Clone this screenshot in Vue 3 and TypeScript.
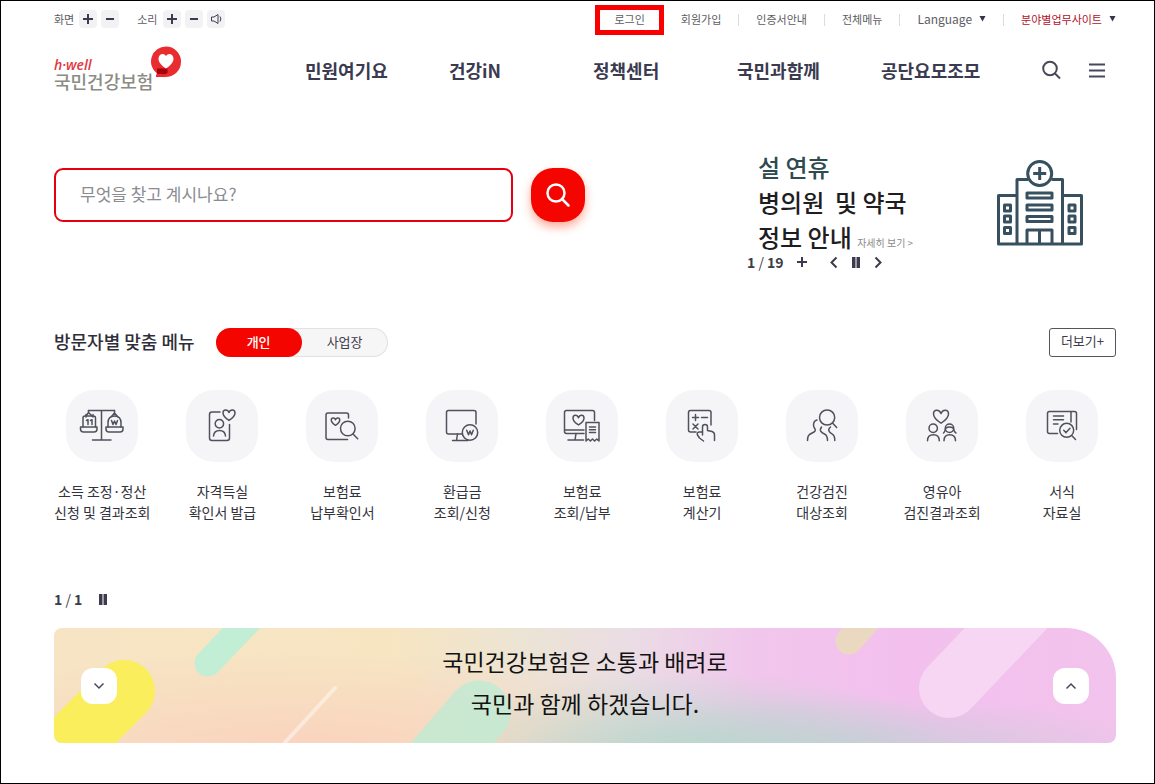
<script setup lang="ts">
import { ref } from 'vue'

interface QuickItem {
  id: string
  lines: [string, string]
}

const heart = (x: number, y: number, s: number): string =>
  `M${x} ${y + s * 0.45}C${x - s * 0.3} ${y + s * 0.25} ${x - s * 0.5} ${y} ${x - s * 0.5} ${y - s * 0.17}` +
  `C${x - s * 0.5} ${y - s * 0.5} ${x - s * 0.1} ${y - s * 0.5} ${x} ${y - s * 0.2}` +
  `C${x + s * 0.1} ${y - s * 0.5} ${x + s * 0.5} ${y - s * 0.5} ${x + s * 0.5} ${y - s * 0.17}` +
  `C${x + s * 0.5} ${y} ${x + s * 0.3} ${y + s * 0.25} ${x} ${y + s * 0.45}Z`

const mainMenu: string[] = ['민원여기요', '건강iN', '정책센터', '국민과함께', '공단요모조모']

const quickItems: QuickItem[] = [
  { id: 'scale', lines: ['소득 조정·정산', '신청 및 결과조회'] },
  { id: 'card', lines: ['자격득실', '확인서 발급'] },
  { id: 'docsearch', lines: ['보험료', '납부확인서'] },
  { id: 'refund', lines: ['환급금', '조회/신청'] },
  { id: 'pay', lines: ['보험료', '조회/납부'] },
  { id: 'calc', lines: ['보험료', '계산기'] },
  { id: 'checkup', lines: ['건강검진', '대상조회'] },
  { id: 'infant', lines: ['영유아', '검진결과조회'] },
  { id: 'forms', lines: ['서식', '자료실'] },
]

const iconPaths: Record<string, string[]> = {
  scale: [
    'M22.5 20.5H48.5M35.5 20.5V50M26.5 50H45',
    'M22.5 20.5V22.5L20 26M22.5 22.5L26 26M48.5 20.5V23L45.5 26.5M48.5 23L51.5 26.5',
    'M17 37V28Q17 26 19 26H27.5Q29.5 26 29.5 28V37M20 24.5V27M27 24.5V27',
    'M14.5 37H31V39Q31 42 28 42H17.5Q14.5 42 14.5 39Z',
    'M42 37V33Q42 26 48.5 26Q55 26 55 33V37',
    'M40 37H57V39Q57 42 54 42H43Q40 42 40 39Z',
    'M20.5 30.5L22 29.7V34.5M24.5 30.5L26 29.7V34.5',
    'M45.5 30.5L47 34.5L48.5 31L50 34.5L51.5 30.5',
  ],
  card: [
    'M34 22H26Q23.5 22 23.5 24.5V48Q23.5 50.5 26 50.5H41Q43.5 50.5 43.5 48V34.5',
    heart(43, 25, 12),
    'M29.2 33.8A4.2 4.2 0 1 0 37.6 33.8A4.2 4.2 0 1 0 29.2 33.8Z',
    'M27.5 46Q28 40.5 33.5 40.5Q39 40.5 39.5 46',
  ],
  docsearch: [
    'M42.5 28V25Q42.5 23 40.5 23H22Q20 23 20 25V47.5Q20 49.5 22 49.5H41.5',
    heart(29.5, 31.5, 8.5),
    'M34.5 38.5A7.3 7.3 0 1 0 49.1 38.5A7.3 7.3 0 1 0 34.5 38.5ZM47 44L51.7 48.7',
  ],
  refund: [
    'M50 34V22.5Q50 20.5 48 20.5H22.5Q20.5 20.5 20.5 22.5V42Q20.5 44 22.5 44H36',
    'M31.5 44L30.5 50.5M26.5 50.5H42',
    'M36.3 42.5A7.7 7.7 0 1 0 51.7 42.5A7.7 7.7 0 1 0 36.3 42.5Z',
    'M40.7 40.3L42.5 44.7L44 41L45.5 44.7L47.3 40.3',
  ],
  pay: [
    'M48.5 30.5V22.5Q48.5 20.5 46.5 20.5H20.5Q18.5 20.5 18.5 22.5V41.5Q18.5 43.5 20.5 43.5H38M18.5 40H38',
    'M30 43.5L29 50M22 50H37.5',
    heart(32.5, 30, 11),
    'M40 32.5H53V51L50.8 49L48.6 51L46.5 49L44.4 51L42.2 49L40 51Z',
    'M43.5 37H49.5M43.5 39.8H49.5M43.5 42.6H49.5',
  ],
  calc: [
    'M45 35V22.5Q45 20.5 43 20.5H24.5Q22.5 20.5 22.5 22.5V40Q22.5 42 24.5 42H30',
    'M26.5 27.5H32.5M29.5 24.5V30.5M35.5 27.5H41.5M27 34L32 39M32 34L27 39',
    'M36.5 45V37Q36.5 34.5 39 34.5Q41.5 34.5 41.5 37V40.5L46 41.5Q48.5 42.3 48.5 45V50.5',
    'M36.5 42H33Q30.5 42.5 31.5 45L33.5 48L37.5 51',
  ],
  checkup: [
    'M33.5 27.5A7.6 7.6 0 1 0 48.7 27.5A7.6 7.6 0 1 0 33.5 27.5ZM46.5 33L50.7 37.5',
    'M31 30Q27.5 31 27.5 35Q27.5 37 29 39Q30 41.5 27 42.5L23.5 44.5Q21.5 46 21.5 50.5',
    'M35.5 37Q33.5 40 35 41.5Q36 43 38.5 44Q41.5 45.5 41.5 50.5',
    'M44.5 37Q42 39 43 41Q43.5 42.5 46 43.8Q49 45.5 48.8 50.5',
  ],
  infant: [
    heart(35, 26.5, 15),
    'M23 38.3A4.2 4.2 0 1 0 31.4 38.3A4.2 4.2 0 1 0 23 38.3ZM21.5 50.7Q21.5 44.7 27.4 44.7Q33.3 44.7 33.3 50.7',
    'M39.3 38.3A4.2 4.2 0 1 0 47.7 38.3A4.2 4.2 0 1 0 39.3 38.3ZM38 50.7Q38 44.7 43.7 44.7Q49.5 44.7 49.5 50.7',
    'M39.3 39Q39 42 37.5 43M47.7 39Q48 42 50 43M40 38Q43.5 36 47 38',
  ],
  forms: [
    'M50.5 39.5V23.5Q50.5 21.5 48.5 21.5H23.5Q21.5 21.5 21.5 23.5V41.5Q21.5 43.5 23.5 43.5H31.5M45 21.5V32',
    'M27.5 26H37.5M27.5 29.7H37.5M27.5 34H32',
    'M33.7 40.3A7 7 0 1 0 47.7 40.3A7 7 0 1 0 33.7 40.3ZM45.7 45.5L49.5 49.5M37.7 40.3L40 42.6L44 38.3',
  ],
}

const activeTab = ref<'personal' | 'business'>('personal')
const query = ref<string>('')
</script>

<template>
  <div class="page">
    <header>
      <div class="utility">
        <div class="adjust">
          <span>화면</span>
          <button type="button" aria-label="화면 확대">
            <svg width="18" height="18" viewBox="0 0 18 18"><path d="M4 9H14M9 4V14" /></svg>
          </button>
          <button type="button" aria-label="화면 축소">
            <svg width="18" height="18" viewBox="0 0 18 18"><path d="M5 9H13" /></svg>
          </button>
        </div>
        <div class="adjust">
          <span>소리</span>
          <button type="button" aria-label="소리 크게">
            <svg width="18" height="18" viewBox="0 0 18 18"><path d="M4 9H14M9 4V14" /></svg>
          </button>
          <button type="button" aria-label="소리 작게">
            <svg width="18" height="18" viewBox="0 0 18 18"><path d="M5 9H13" /></svg>
          </button>
          <button type="button" aria-label="음소거">
            <svg class="thin" width="18" height="18" viewBox="0 0 18 18">
              <path d="M4.5 7H7L11 4.5V13.5L7 11H4.5ZM13 6.5Q14.8 9 13 11.5" />
            </svg>
          </button>
        </div>
        <nav class="links" aria-label="사용자 메뉴">
          <a class="login" href="#">로그인</a>
          <a href="#">회원가입</a>
          <i class="sep"></i>
          <a href="#">인증서안내</a>
          <i class="sep"></i>
          <a href="#">전체메뉴</a>
          <i class="sep"></i>
          <button class="language" type="button">
            Language<svg width="7" height="6" viewBox="0 0 7 6"><path d="M.5 0H6.5L3.5 5.5Z" /></svg>
          </button>
          <i class="sep"></i>
          <button class="sites" type="button">
            분야별업무사이트<svg width="7" height="6" viewBox="0 0 7 6"><path d="M.5 0H6.5L3.5 5.5Z" /></svg>
          </button>
        </nav>
      </div>

      <div class="gnb">
        <a class="logo" href="#">
          <span class="brand"><em>h·well</em><strong>국민건강보험</strong></span>
          <svg width="32" height="32" viewBox="0 0 32 32">
            <path fill="#e92c30" d="M16 .5A15 15 0 0 1 31 15.5C31 25 24 31 15 31H6Q5.5 29 7 27.5A15 15 0 0 1 16 .5Z" />
            <path fill="#a9000d" d="M7 22.5H17.5V27Q16 28.5 12 28H7Z" />
            <path fill="#fff" d="M16 22.5C12 20 8.5 16.5 8.5 12.8C8.5 7.5 14 6.5 16 10C18 6.5 23.5 7.5 23.5 12.8C23.5 16.5 20 20 16 22.5Z" />
          </svg>
        </a>
        <nav class="menu" aria-label="주 메뉴">
          <a v-for="item in mainMenu" :key="item" href="#">{{ item }}</a>
        </nav>
        <div class="tools">
          <button type="button" aria-label="검색 열기">
            <svg width="20" height="20" viewBox="0 0 20 20"><circle cx="9" cy="8.5" r="6.8" /><path d="M14 13.5L19 18.5" /></svg>
          </button>
          <button type="button" aria-label="전체 메뉴 열기">
            <svg width="20" height="20" viewBox="0 0 20 20"><path d="M2 4.5H18M2 10.5H18M2 16.5H18" /></svg>
          </button>
        </div>
      </div>
    </header>

    <main>
      <section class="hero">
        <form class="search" role="search" @submit.prevent>
          <input v-model="query" type="text" aria-label="검색어" placeholder="무엇을 찾고 계시나요?" />
          <button type="submit" aria-label="검색">
            <svg width="26" height="26" viewBox="0 0 26 26"><circle cx="11" cy="11" r="8.5" /><path d="M17 17L23.5 23.5" /></svg>
          </button>
        </form>

        <div class="promo">
          <div class="slide">
            <p>
              <span class="lead">설 연휴</span><br />병의원&nbsp; 및 약국<br />정보 안내
              <a href="#">자세히 보기 &gt;</a>
            </p>
            <svg width="88" height="88" viewBox="0 0 88 88" aria-hidden="true">
              <path d="M21 36.5H2.5V85H85.5V36.5H66.5M21 85V20.5H32M55.5 20.5H66.5V85" />
              <circle cx="43.7" cy="14.5" r="12" />
              <path d="M43.7 8V21M37.2 14.5H50.2" />
              <path d="M31 34H56V39H31ZM31 46H56V51H31ZM31 57.5H56V62.5H31ZM31 85V71H56V85M43.5 71V85" />
              <path d="M8.5 46H14.5V52H8.5ZM8.5 57H14.5V63H8.5ZM8.5 68.5H14.5V74.5H8.5ZM73 46H79V52H73ZM73 57H79V63H73ZM73 68.5H79V74.5H73Z" />
            </svg>
          </div>
          <div class="pager">
            <span class="count"><b>1</b> / <b>19</b></span>
            <button class="more" type="button" aria-label="배너 전체보기">
              <svg width="12" height="18" viewBox="0 0 12 18"><path d="M1 9H11M6 4V14" /></svg>
            </button>
            <button type="button" aria-label="이전">
              <svg width="10" height="18" viewBox="0 0 10 18"><path d="M7.5 4.5L2.500 9.5L7.500 14.5" /></svg>
            </button>
            <button type="button" aria-label="일시정지">
              <svg class="solid" width="10" height="18" viewBox="0 0 10 18"><path d="M1 4H4.500V15H1ZM5.500 4H9V15H5.500Z" /></svg>
            </button>
            <button type="button" aria-label="다음">
              <svg width="10" height="18" viewBox="0 0 10 18"><path d="M2.500 4.5L7.500 9.5L2.500 14.5" /></svg>
            </button>
          </div>
        </div>
      </section>

      <section class="custom">
        <div class="heading">
          <h2>방문자별 맞춤 메뉴</h2>
          <div class="tabs" role="tablist">
            <button type="button" role="tab" :aria-selected="activeTab === 'personal'" :class="{ on: activeTab === 'personal' }" @click="activeTab = 'personal'">개인</button>
            <button type="button" role="tab" :aria-selected="activeTab === 'business'" :class="{ on: activeTab === 'business' }" @click="activeTab = 'business'">사업장</button>
          </div>
          <a class="all" href="#">더보기+</a>
        </div>
        <ul class="quick">
          <li v-for="item in quickItems" :key="item.id">
            <a href="#">
              <svg width="72" height="72" viewBox="0 0 72 72" aria-hidden="true">
                <path v-for="(d, i) in iconPaths[item.id]" :key="i" :d="d" />
              </svg>
              <span>{{ item.lines[0] }}<br />{{ item.lines[1] }}</span>
            </a>
          </li>
        </ul>
      </section>

      <section class="notice">
        <div class="pager">
          <span class="count"><b>1</b> / <b>1</b></span>
          <button type="button" aria-label="일시정지">
            <svg class="solid" width="10" height="18" viewBox="0 0 10 18"><path d="M1 4H4.500V15H1ZM5.500 4H9V15H5.500Z" /></svg>
          </button>
        </div>
        <div class="banner">
          <svg class="shapes" viewBox="0 0 1062 115" preserveAspectRatio="xMidYMid slice" aria-hidden="true">
            <g fill="none" stroke-linecap="round">
              <path d="M70 63L0 133" stroke="#fbee5c" stroke-width="62" />
              <path d="M154 35L197 -10" stroke="#c2eed5" stroke-width="27" />
              <path d="M281 60L225 121" stroke="#fff" stroke-opacity=".45" stroke-width="4" />
              <path d="M425 84L368 150" stroke="#c2ead2" stroke-opacity=".85" stroke-width="63" />
              <path d="M795 13L815 -10" stroke="#ead9c0" stroke-width="27" />
              <path d="M895 60L975 -24" stroke="#f6d6f2" stroke-width="60" />
            </g>
          </svg>
          <button type="button" aria-label="다음 공지">
            <svg width="12" height="12" viewBox="0 0 12 12"><path d="M1.5 3.5L6 8L10.5 3.5" /></svg>
          </button>
          <p>국민건강보험은 소통과 배려로<br />국민과 함께 하겠습니다.</p>
          <button type="button" aria-label="이전 공지">
            <svg width="12" height="12" viewBox="0 0 12 12"><path d="M1.5 8.5L6 4L10.5 8.5" /></svg>
          </button>
        </div>
      </section>
    </main>
  </div>
</template>

<style>
body {
  margin: 0;
  background: #fff;
}
</style>

<style scoped>
.page {
  box-sizing: border-box;
  min-height: 100vh;
  padding: 4px 38px 38px 53px;
  border: 1px solid #000;
  background: #fff;
  color: #3c3c4a;
  font-family: "Noto Sans CJK KR", "Noto Sans", sans-serif;
}
a {
  color: inherit;
  text-decoration: none;
}
button {
  padding: 0;
  border: 0;
  background: none;
  color: inherit;
  font: inherit;
  cursor: pointer;
}
svg {
  display: block;
  flex: none;
}
.utility {
  display: flex;
  align-items: center;
  height: 30px;
  color: #5c5c62;
  font-size: 11px;
}
.adjust {
  display: flex;
  align-items: center;
  gap: 4px;
  margin-right: 18px;
  padding-bottom: 2px;
}
.adjust span {
  margin-right: 1px;
}
.adjust button {
  width: 18px;
  height: 18px;
  border-radius: 4px;
  background: #f2f2f4;
}
.adjust path {
  fill: none;
  stroke: #3c3c4e;
  stroke-width: 2;
}
.adjust .thin path {
  stroke-width: 1;
}
.links {
  display: flex;
  align-items: center;
  gap: 17px;
  margin-left: auto;
  white-space: nowrap;
}
.links a,
.links button {
  padding-bottom: 2px;
  line-height: 18px;
}
.links .login {
  padding: 0 14px 2px;
  border: 5px solid #fa0000;
}
.sep {
  width: 1px;
  height: 12px;
  background: #dcdcdf;
}
.links button {
  display: flex;
  align-items: center;
  gap: 7px;
}
.links button path {
  fill: #34344a;
}
.language {
  font-size: 12px;
}
.links .sites {
  color: #b0122a;
}
.gnb {
  display: flex;
  align-items: center;
  height: 70px;
}
.logo {
  display: flex;
  width: 251px;
  height: 48px;
}
.brand {
  display: flex;
  flex-direction: column;
  padding-top: 11px;
}
.brand em {
  color: #e2383f;
  font: italic 600 14px/16px "Open Sans", sans-serif;
}
.brand strong {
  margin-right: -3px;
  color: #8b8c84;
  font-size: 18px;
  font-weight: 500;
  line-height: 16px;
}
.menu {
  display: grid;
  flex: 0 1 720px;
  grid-template-columns: repeat(5, 1fr);
  color: #3a3a50;
  font-size: 18px;
  font-weight: 700;
  white-space: nowrap;
}
.tools {
  display: flex;
  gap: 26px;
  margin-left: auto;
  padding-right: 9px;
}
.tools svg {
  fill: none;
  stroke: #48485a;
  stroke-width: 2;
}
.hero {
  display: flex;
  align-items: flex-start;
  justify-content: space-between;
  padding-top: 44px;
}
.search {
  display: flex;
  flex: 0 1 531px;
  gap: 18px;
  padding-top: 19px;
}
.search input {
  box-sizing: border-box;
  flex: 1;
  min-width: 0;
  height: 54px;
  padding: 0 24px 4px;
  border: 2px solid #e6000f;
  border-radius: 9px;
  outline: 0;
  background: #fff;
  color: #333;
  font: 17px "Noto Sans CJK KR", sans-serif;
}
.search input::placeholder {
  color: #8c8c92;
}
.search button {
  display: grid;
  flex: none;
  place-items: center;
  width: 54px;
  height: 54px;
  border-radius: 22px;
  background: #f40500;
  box-shadow: 0 5px 10px rgba(255, 70, 30, 0.45);
}
.search button svg {
  fill: none;
  stroke: #fff;
  stroke-width: 2.5;
  stroke-linecap: round;
}
.promo {
  flex: 0 0 369px;
}
.slide {
  display: flex;
  align-items: flex-start;
  justify-content: space-between;
  height: 104px;
  padding: 0 32px 0 11px;
}
.slide p {
  margin: 0;
  color: #1e1e22;
  font-size: 24px;
  font-weight: 500;
  line-height: 35px;
  white-space: nowrap;
}
.slide .lead {
  color: #2f4a50;
}
.slide a {
  color: #8a8a8a;
  font-size: 10px;
  font-weight: 400;
  line-height: 10px;
}
.slide svg {
  margin-top: 10px;
  fill: none;
  stroke: #36505f;
  stroke-width: 3;
  stroke-linejoin: round;
}
.pager {
  display: flex;
  align-items: center;
  height: 18px;
  gap: 12px;
}
.count {
  font-size: 14px;
  line-height: 18px;
}
.pager svg {
  fill: none;
  stroke: #3c3c4e;
  stroke-width: 2;
}
.pager .solid {
  fill: #3c3c4e;
  stroke: none;
}
.more {
  margin-right: 9px;
}
.custom {
  padding-top: 57px;
}
.heading {
  display: flex;
  align-items: center;
}
.heading h2 {
  margin: 0 21px 0 0;
  padding-bottom: 3px;
  color: #2f2f3a;
  font-size: 18px;
  font-weight: 500;
  line-height: 26px;
}
.tabs {
  display: flex;
  box-sizing: border-box;
  height: 29px;
  border-radius: 15px;
  background: #f6f6f7;
  box-shadow: inset 0 0 0 1px #e2e2e5;
  font-size: 13px;
}
.tabs button {
  width: 86px;
  padding-bottom: 3px;
  border-radius: 15px;
}
.tabs .on {
  background: #f40500;
  color: #fff;
  font-weight: 500;
}
.all {
  box-sizing: border-box;
  margin-left: auto;
  padding: 0 11px 3px;
  border: 1px solid #55555f;
  border-radius: 3px;
  font-size: 13px;
  line-height: 24px;
}
.quick {
  display: grid;
  grid-template-columns: repeat(9, 1fr);
  gap: 24px;
  margin: 33px 0 0;
  padding: 0 6px 0 0;
  list-style: none;
}
.quick a {
  display: flex;
  flex-direction: column;
  align-items: center;
  gap: 19px;
  color: #33333b;
  font-size: 14px;
  line-height: 21px;
  text-align: center;
  white-space: nowrap;
}
.quick svg {
  border-radius: 28px;
  background: #f5f5f7;
  fill: none;
  stroke: #50505f;
  stroke-width: 1.5;
  stroke-linecap: round;
  stroke-linejoin: round;
}
.notice {
  padding-top: 67px;
}
.notice .pager {
  gap: 16px;
}
.banner {
  position: relative;
  display: flex;
  align-items: center;
  justify-content: space-between;
  box-sizing: border-box;
  min-height: 115px;
  margin-top: 20px;
  padding: 0 27px;
  border-radius: 8px 50px 8px 8px;
  overflow: hidden;
  background:
    radial-gradient(ellipse 25% 70% at 60% 108%, rgba(184, 216, 204, 0.95), rgba(200, 212, 212, 0) 100%),
    radial-gradient(ellipse 30% 50% at 74% 108%, rgba(196, 206, 214, 0.9), rgba(214, 200, 220, 0) 100%),
    radial-gradient(ellipse 42% 90% at 24% 110%, #fad2be, rgba(250, 212, 192, 0) 100%),
    linear-gradient(90deg, #f6e4c4 0%, #f7e5c2 32%, #ece4d4 44%, #eadde4 54%, #f1c6ec 66%, #f3c0ee 80%, #f2c3ec 100%);
}
.shapes {
  position: absolute;
  inset: 0;
  width: 100%;
  height: 100%;
}
.banner button {
  position: relative;
  display: grid;
  place-items: center;
  width: 36px;
  height: 36px;
  border-radius: 12px;
  background: #fff;
}
.banner button svg {
  fill: none;
  stroke: #48485a;
  stroke-width: 1.5;
}
.banner p {
  position: relative;
  margin: 0;
  padding-bottom: 8px;
  color: #121212;
  font-size: 23px;
  line-height: 42px;
  text-align: center;
}
</style>
